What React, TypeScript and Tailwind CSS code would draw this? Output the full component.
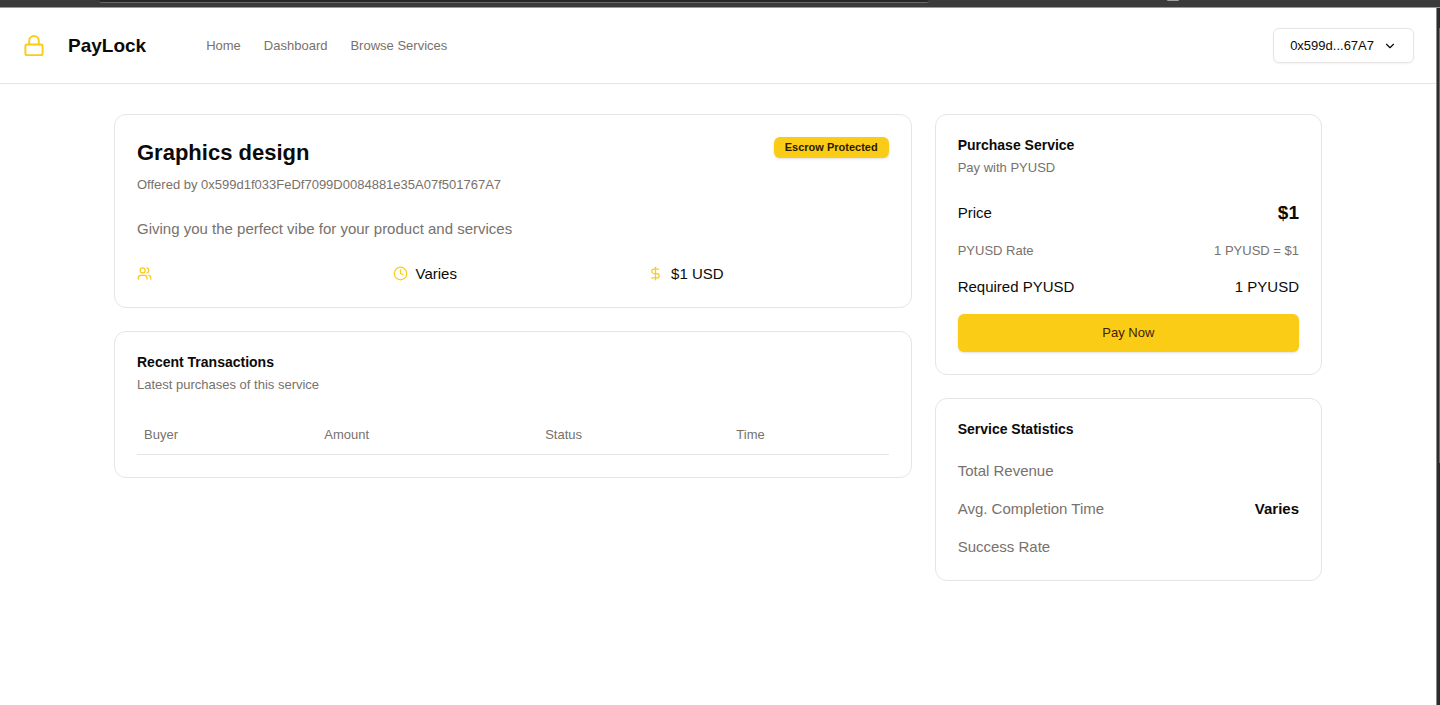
import type { ReactNode } from "react";
import { ChevronDown, Clock, DollarSign, Lock, Users } from "lucide-react";

const NAV_LINKS = ["Home", "Dashboard", "Browse Services"];

const TRANSACTION_COLUMNS = ["Buyer", "Amount", "Status", "Time"];

const STATISTICS = [
  { label: "Total Revenue", value: "" },
  { label: "Avg. Completion Time", value: "Varies" },
  { label: "Success Rate", value: "" },
];

function BrowserEdge() {
  return (
    <div className="flex h-2 items-start border-b border-[#9a9a9a] bg-[#3b3b3b] pl-[99px]">
      <div className="h-[3px] w-[830px] rounded-b-lg border-b border-[#6b6b6b] bg-[#282828]" />
      <div className="ml-[238px] h-px w-3 rounded-b bg-[#a0a0a0]" />
    </div>
  );
}

function ScrollTrack() {
  return (
    <div className="flex w-1 justify-end border-l border-[#8a8a8a] bg-[#2c2c2c] pt-5">
      <div className="h-[435px] w-px bg-[#6b6b6b]" />
    </div>
  );
}

function Header() {
  return (
    <header className="flex h-[76px] items-center border-b border-[#e7e5e4] pr-[22px] pl-[22px]">
      <Lock className="size-6 pb-px text-[#facc15]" strokeWidth={2} />
      <span className="ml-[22px] pt-px text-[19px] font-bold text-[#0c0a09]">PayLock</span>
      <nav className="ml-[60px] flex gap-[23px] text-[13px] text-[#78716c]">
        {NAV_LINKS.map((link) => (
          <a key={link} href="#">
            {link}
          </a>
        ))}
      </nav>
      <button
        type="button"
        className="ml-auto flex h-[35px] items-center gap-[9px] rounded-md border border-[#e7e5e4] px-4 text-[13px] text-[#0c0a09] shadow-xs"
      >
        0x599d...67A7
        <ChevronDown className="size-[14px]" />
      </button>
    </header>
  );
}

function Card({ children }: { children: ReactNode }) {
  return <section className="rounded-xl border border-[#e7e5e4] bg-white p-[22px]">{children}</section>;
}

function CardTitle({ children }: { children: ReactNode }) {
  return <h2 className="text-[14px] leading-4 font-bold text-[#0c0a09]">{children}</h2>;
}

function ServiceCard() {
  return (
    <Card>
      <div className="flex items-start justify-between">
        <div>
          <h1 className="text-[22px] leading-8 font-bold text-[#0c0a09]">Graphics design</h1>
          <p className="mt-[6px] text-[13px] leading-[19px] text-[#78716c]">
            Offered by 0x599d1f033FeDf7099D0084881e35A07f501767A7
          </p>
        </div>
        <span className="rounded-md bg-[#facc15] px-[11px] py-[2px] text-[11px] leading-[17px] font-bold text-[#2a1a05] shadow-sm">
          Escrow Protected
        </span>
      </div>
      <p className="mt-[23px] text-[15px] leading-[23px] text-[#78716c]">
        Giving you the perfect vibe for your product and services
      </p>
      <div className="mt-[22px] grid grid-cols-3 gap-[15px] text-[15px] leading-[23px]">
        <div className="flex items-center gap-2">
          <Users className="size-[15px] text-[#facc15]" />
        </div>
        <div className="flex items-center gap-2">
          <Clock className="size-[15px] text-[#facc15]" />
          <span>Varies</span>
        </div>
        <div className="flex items-center gap-2">
          <DollarSign className="size-[15px] text-[#facc15]" />
          <span>$1 USD</span>
        </div>
      </div>
    </Card>
  );
}

function TransactionsCard() {
  return (
    <Card>
      <CardTitle>Recent Transactions</CardTitle>
      <p className="mt-[5px] text-[13px] leading-[19px] text-[#78716c]">Latest purchases of this service</p>
      <table className="mt-[22px] w-full text-left text-[13px] text-[#78716c]">
        <thead>
          <tr className="h-[38px] border-b border-[#e7e5e4]">
            {TRANSACTION_COLUMNS.map((column) => (
              <th key={column} className="px-[7px] font-normal">
                {column}
              </th>
            ))}
          </tr>
        </thead>
        <tbody />
      </table>
    </Card>
  );
}

function PurchaseCard() {
  return (
    <Card>
      <CardTitle>Purchase Service</CardTitle>
      <p className="mt-[5px] text-[13px] leading-[19px] text-[#78716c]">Pay with PYUSD</p>
      <div className="mt-[23px] flex items-center justify-between text-[15px] leading-[26px]">
        <span>Price</span>
        <span className="text-[19px] font-bold">$1</span>
      </div>
      <div className="mt-[15px] flex justify-between text-[13px] leading-[19px] text-[#78716c]">
        <span>PYUSD Rate</span>
        <span>1 PYUSD = $1</span>
      </div>
      <div className="mt-[15px] flex justify-between text-[15px] leading-[23px]">
        <span>Required PYUSD</span>
        <span>1 PYUSD</span>
      </div>
      <button
        type="button"
        className="mt-4 h-[38px] w-full rounded-md bg-[#facc15] text-[13px] text-[#422006] shadow-sm"
      >
        Pay Now
      </button>
    </Card>
  );
}

function StatisticsCard() {
  return (
    <Card>
      <CardTitle>Service Statistics</CardTitle>
      <dl className="mt-[22px] space-y-[15px] text-[15px] leading-[23px]">
        {STATISTICS.map((stat) => (
          <div key={stat.label} className="flex justify-between">
            <dt className="text-[#78716c]">{stat.label}</dt>
            <dd className="font-bold">{stat.value}</dd>
          </div>
        ))}
      </dl>
    </Card>
  );
}

export default function App() {
  return (
    <div className="flex min-h-screen flex-col bg-white font-['Liberation_Sans',Arial,sans-serif] text-[#0c0a09]">
      <BrowserEdge />
      <div className="flex flex-1">
        <div className="min-w-0 flex-1">
          <Header />
          <main className="mx-auto grid max-w-[1208px] grid-cols-3 items-start gap-[23px] py-[30px]">
            <div className="col-span-2 space-y-[23px]">
              <ServiceCard />
              <TransactionsCard />
            </div>
            <div className="space-y-[23px]">
              <PurchaseCard />
              <StatisticsCard />
            </div>
          </main>
        </div>
        <ScrollTrack />
      </div>
    </div>
  );
}
